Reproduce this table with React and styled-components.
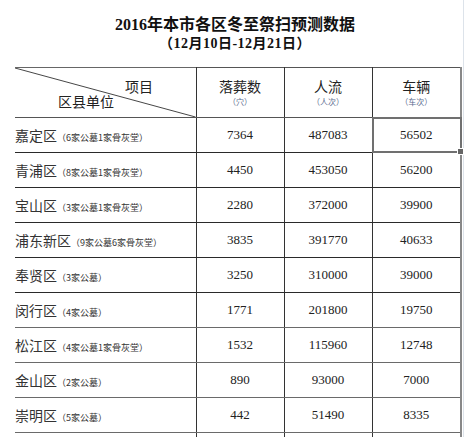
import React from "react";
import styled, { createGlobalStyle } from "styled-components";

const rows = [
  { name: "嘉定区", note: "（6家公墓1家骨灰堂）", burial: "7364", people: "487083", cars: "56502" },
  { name: "青浦区", note: "（8家公墓1家骨灰堂）", burial: "4450", people: "453050", cars: "56200" },
  { name: "宝山区", note: "（3家公墓1家骨灰堂）", burial: "2280", people: "372000", cars: "39900" },
  { name: "浦东新区", note: "（9家公墓6家骨灰堂）", burial: "3835", people: "391770", cars: "40633" },
  { name: "奉贤区", note: "（3家公墓）", burial: "3250", people: "310000", cars: "39000" },
  { name: "闵行区", note: "（4家公墓）", burial: "1771", people: "201800", cars: "19750", light: true },
  { name: "松江区", note: "（4家公墓1家骨灰堂）", burial: "1532", people: "115960", cars: "12748", light: true },
  { name: "金山区", note: "（2家公墓）", burial: "890", people: "93000", cars: "7000", light: true },
  { name: "崇明区", note: "（5家公墓）", burial: "442", people: "51490", cars: "8335", light: true },
];

const Global = createGlobalStyle`
  html, body {
    margin: 0;
    padding: 0;
    background: #ffffff;
    overflow: hidden;
  }
  body {
    font-family: "Liberation Serif", "Noto Sans CJK SC", serif;
    color: #1e1e1e;
  }
`;

const Page = styled.div`
  position: relative;
  width: 470px;
  height: 437px;
  overflow: hidden;
`;

const Gridline = styled.div`
  position: absolute;
  top: 0;
  bottom: 0;
  left: 463px;
  width: 1px;
  background: #dde3ea;
`;

const Heading = styled.header`
  height: 67px;
  box-sizing: border-box;
  padding-top: 16px;
  text-align: center;
  font-weight: bold;
`;

const Title = styled.div`
  font-size: 16px;
  line-height: 18px;
  color: #111;
`;

const Subtitle = styled.div`
  font-size: 14px;
  line-height: 17px;
  margin-top: 1px;
  letter-spacing: 0.5px;
  color: #111;
`;

const Table = styled.table`
  margin-left: 15px;
  border-collapse: collapse;
  table-layout: fixed;
  width: 446px;
`;

const HeadCell = styled.th`
  height: 49px;
  padding: 0;
  font-weight: normal;
  border-top: 1px solid #555;
  border-bottom: 1px solid #555;
  border-left: 1px solid #333;
  border-right: ${(p) => (p.$last ? "2px solid #888" : "1px solid #333")};
  text-align: center;
  vertical-align: middle;
`;

const CornerCell = styled.th`
  position: relative;
  height: 49px;
  padding: 0;
  font-weight: normal;
  border-top: 1px solid #666;
  border-bottom: 1px solid #555;
  border-right: 1px solid #333;
`;

const Diagonal = styled.svg`
  position: absolute;
  left: 0;
  top: 0;
  width: 100%;
  height: 100%;
`;

const CornerLabel = styled.span`
  position: absolute;
  left: ${(p) => p.$x}px;
  top: ${(p) => p.$y}px;
  font-size: 14px;
  line-height: 18px;
  font-family: "Noto Sans CJK SC", sans-serif;
  color: #222;
`;

const HeadLabel = styled.div`
  font-size: 14px;
  line-height: 16px;
  font-family: "Noto Sans CJK SC", sans-serif;
  color: #222;
`;

const HeadUnit = styled.div`
  font-size: 8px;
  line-height: 10px;
  margin-top: 3px;
  font-family: "Noto Sans CJK SC", sans-serif;
  color: #5a6b8e;
`;

const Row = styled.tr`
  height: 35px;
  & > td {
    border-bottom: 1px solid ${(p) => (p.$light ? "#6a6a6a" : "#2a2a2a")};
  }
`;

const NameCell = styled.td`
  padding: 0;
  white-space: nowrap;
  border-right: 1px solid #333;
  vertical-align: middle;
`;

const District = styled.span`
  font-size: 14px;
  font-family: "Noto Sans CJK SC", sans-serif;
  color: #333;
`;

const Note = styled.span`
  font-size: 9px;
  font-family: "Noto Sans CJK SC", sans-serif;
  color: #333;
`;

const NumCell = styled.td`
  position: relative;
  padding: 0;
  text-align: center;
  font-size: 13px;
  font-family: "Liberation Serif", serif;
  color: #222;
  border-right: ${(p) => (p.$last ? "2px solid #888" : "1px solid #333")};
  vertical-align: middle;
`;

const Selection = styled.div`
  position: absolute;
  left: -1px;
  top: -1px;
  right: -2px;
  bottom: -1px;
  border: 2px solid #707070;
  pointer-events: none;
`;

const Handle = styled.div`
  position: absolute;
  right: -4px;
  bottom: -4px;
  width: 5px;
  height: 5px;
  background: #666;
  border: 1px solid #fff;
`;

export default function App() {
  return (
    <Page>
      <Global />
      <Gridline />
      <Heading>
        <Title>2016年本市各区冬至祭扫预测数据</Title>
        <Subtitle>（12月10日-12月21日）</Subtitle>
      </Heading>
      <Table>
        <colgroup>
          <col style={{ width: 181 }} />
          <col style={{ width: 88 }} />
          <col style={{ width: 88 }} />
          <col style={{ width: 89 }} />
        </colgroup>
        <thead>
          <tr>
            <CornerCell>
              <Diagonal viewBox="0 0 181 50" preserveAspectRatio="none">
                <line x1="0" y1="0" x2="181" y2="50" stroke="#444" strokeWidth="1" />
              </Diagonal>
              <CornerLabel $x={110} $y={9}>项目</CornerLabel>
              <CornerLabel $x={43} $y={24}>区县单位</CornerLabel>
            </CornerCell>
            <HeadCell>
              <HeadLabel>落葬数</HeadLabel>
              <HeadUnit>（穴）</HeadUnit>
            </HeadCell>
            <HeadCell>
              <HeadLabel>人流</HeadLabel>
              <HeadUnit>（人次）</HeadUnit>
            </HeadCell>
            <HeadCell $last>
              <HeadLabel>车辆</HeadLabel>
              <HeadUnit>（车次）</HeadUnit>
            </HeadCell>
          </tr>
        </thead>
        <tbody>
          {rows.map((r, i) => (
            <Row key={r.name} $light={r.light}>
              <NameCell>
                <District>{r.name}</District>
                <Note>{r.note}</Note>
              </NameCell>
              <NumCell>{r.burial}</NumCell>
              <NumCell>{r.people}</NumCell>
              <NumCell $last>
                {r.cars}
                {i === 0 && (
                  <Selection>
                    <Handle />
                  </Selection>
                )}
              </NumCell>
            </Row>
          ))}
          <Row $light>
            <NameCell />
            <NumCell />
            <NumCell />
            <NumCell $last />
          </Row>
        </tbody>
      </Table>
    </Page>
  );
}
